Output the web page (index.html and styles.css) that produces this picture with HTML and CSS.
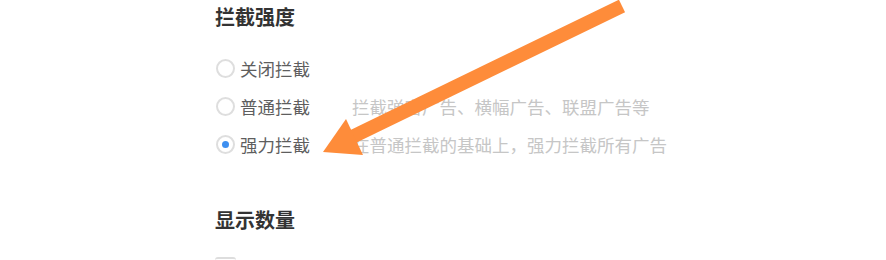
FILE: index.html
```html
<!DOCTYPE html>
<html lang="zh">
<head>
<meta charset="utf-8">
<link rel="stylesheet" href="styles.css">
</head>
<body>
<div class="page">
  <section class="section">
    <h2 class="title">拦截强度</h2>
    <div class="options">
      <div class="option">
        <span class="radio"></span>
        <span class="label">关闭拦截</span>
      </div>
      <div class="option">
        <span class="radio"></span>
        <span class="label">普通拦截</span>
        <span class="desc">拦截弹窗广告、横幅广告、联盟广告等</span>
      </div>
      <div class="option">
        <span class="radio checked"></span>
        <span class="label">强力拦截</span>
        <span class="desc">在普通拦截的基础上，强力拦截所有广告</span>
      </div>
    </div>
  </section>
  <section class="section second">
    <h2 class="title">显示数量</h2>
    <div class="stub"></div>
  </section>
</div>
<svg class="arrow" width="886" height="260" viewBox="0 0 886 260">
  <line x1="622" y1="6" x2="352" y2="137" stroke="#fe8c3a" stroke-width="14"/>
  <polygon points="346,119 323,152 363,155" fill="#fe8c3a"/>
</svg>
</body>
</html>
```

FILE: styles.css
```css
html, body {
  margin: 0;
  padding: 0;
  background: #ffffff;
}
body {
  width: 886px;
  height: 260px;
  overflow: hidden;
  position: relative;
  font-family: "Noto Sans CJK SC", "Noto Sans", sans-serif;
}
.page {
  padding: 3px 0 0 215px;
}
.title {
  margin: 0;
  font-size: 20px;
  line-height: 28px;
  font-weight: 700;
  color: #333333;
}
.options {
  margin-top: 18px;
  display: flex;
  flex-direction: column;
}
.option {
  height: 38px;
  display: flex;
  align-items: center;
  font-size: 17.5px;
}
.radio {
  width: 15px;
  height: 15px;
  border: 2px solid #dedede;
  border-radius: 50%;
  box-sizing: content-box;
  margin-left: 1px;
  margin-right: 5px;
  display: flex;
  align-items: center;
  justify-content: center;
  flex: none;
}
.radio.checked::after {
  content: "";
  width: 7px;
  height: 7px;
  border-radius: 50%;
  background: #3d8ff0;
}
.label {
  width: 112px;
  color: #5e5e5e;
  flex: none;
}
.desc {
  color: #c6c6c6;
  white-space: nowrap;
}
.second {
  margin-top: 43px;
}
.stub {
  margin-top: 23px;
  width: 21px;
  height: 6px;
  border-top: 2px solid #dddddd;
  border-radius: 3px 3px 0 0;
}
.arrow {
  position: absolute;
  left: 0;
  top: 0;
  pointer-events: none;
}
```
